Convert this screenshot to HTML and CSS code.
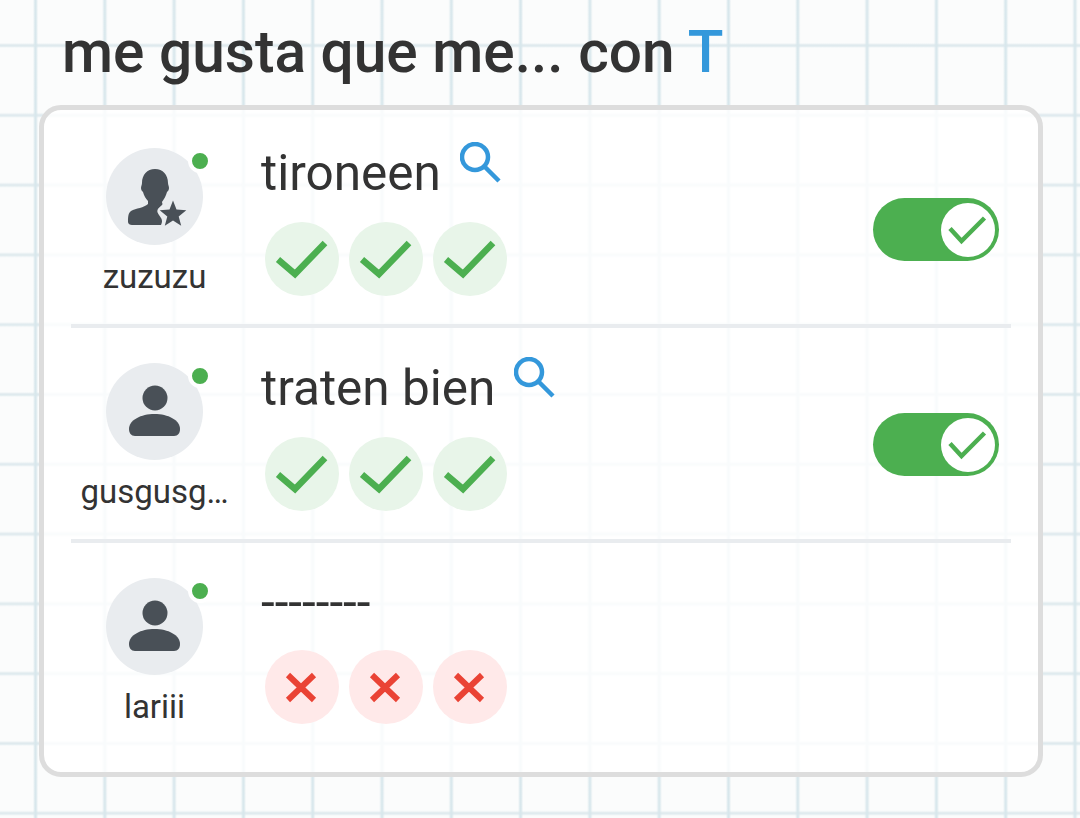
FILE: index.html
```html
<!DOCTYPE html>
<html>
<head lang="es">
    <meta charset="UTF-8">
    <title>me gusta que me... con T</title>
    <link rel="stylesheet" href="styles.css">
</head>
<body>
<h1 class="title">me gusta que me... con <span class="letter">T</span></h1>
<div class="card">
    <div class="row">
        <div class="player">
            <div class="avatar">
                <svg viewBox="0 0 97 97" width="97" height="97">
                    <path class="user" d="M49 21C41 21 36 27 36 35C36 37 35 38 35 40C35 42 36 43 37 44C38 48 40 51 42 53L42 56C38 60 30 60 25 63C22 65 22 70 22 74C22 76 24 77 26 77L55 77C57 73 56 71 53 67C50 63 51 61 56 57C57 56 56 55 56 54C58 51 60 48 61 44C62 43 63 42 63 40C63 38 62 37 62 35C62 27 57 21 49 21Z"/>
                    <polygon class="user" points="67,52.5 70.5,61.6 80.3,62.2 72.7,68.4 75.2,77.8 67,72.5 58.8,77.8 61.3,68.4 53.7,62.2 63.5,61.6"/>
                </svg>
                <span class="dot"></span>
            </div>
            <div class="name">zuzuzu</div>
        </div>
        <div class="answer">
            <div class="word-line">
                <span class="word">tironeen</span>
                <svg class="search" viewBox="0 0 41 41" width="41" height="41">
                    <circle cx="15" cy="15" r="13"/>
                    <line x1="24.5" y1="24.5" x2="39" y2="39"/>
                </svg>
            </div>
            <div class="votes">
                <span class="vote yes"><svg viewBox="0 0 74 74" width="74" height="74"><path d="M13 37.5L30 52L60 21"/></svg></span>
                <span class="vote yes"><svg viewBox="0 0 74 74" width="74" height="74"><path d="M13 37.5L30 52L60 21"/></svg></span>
                <span class="vote yes"><svg viewBox="0 0 74 74" width="74" height="74"><path d="M13 37.5L30 52L60 21"/></svg></span>
            </div>
        </div>
        <div class="toggle">
            <span class="knob"><svg viewBox="0 0 54 54" width="54" height="54"><path d="M9 25.5L20.5 38L43.5 15"/></svg></span>
        </div>
    </div>
    <div class="row">
        <div class="player">
            <div class="avatar">
                <svg viewBox="0 0 97 97" width="97" height="97">
                    <circle class="user" cx="49" cy="35" r="12.5"/>
                    <path class="user" d="M23 66C23 57 35 51 48.5 51C62 51 74 57 74 66C74 70 72 73 68 73H29C25 73 23 70 23 66Z"/>
                </svg>
                <span class="dot"></span>
            </div>
            <div class="name">gusgusg…</div>
        </div>
        <div class="answer">
            <div class="word-line">
                <span class="word">traten bien</span>
                <svg class="search" viewBox="0 0 41 41" width="41" height="41">
                    <circle cx="15" cy="15" r="13"/>
                    <line x1="24.5" y1="24.5" x2="39" y2="39"/>
                </svg>
            </div>
            <div class="votes">
                <span class="vote yes"><svg viewBox="0 0 74 74" width="74" height="74"><path d="M13 37.5L30 52L60 21"/></svg></span>
                <span class="vote yes"><svg viewBox="0 0 74 74" width="74" height="74"><path d="M13 37.5L30 52L60 21"/></svg></span>
                <span class="vote yes"><svg viewBox="0 0 74 74" width="74" height="74"><path d="M13 37.5L30 52L60 21"/></svg></span>
            </div>
        </div>
        <div class="toggle">
            <span class="knob"><svg viewBox="0 0 54 54" width="54" height="54"><path d="M9 25.5L20.5 38L43.5 15"/></svg></span>
        </div>
    </div>
    <div class="row">
        <div class="player">
            <div class="avatar">
                <svg viewBox="0 0 97 97" width="97" height="97">
                    <circle class="user" cx="49" cy="35" r="12.5"/>
                    <path class="user" d="M23 66C23 57 35 51 48.5 51C62 51 74 57 74 66C74 70 72 73 68 73H29C25 73 23 70 23 66Z"/>
                </svg>
                <span class="dot"></span>
            </div>
            <div class="name">lariii</div>
        </div>
        <div class="answer">
            <div class="word-line">
                <span class="word">--------</span>
            </div>
            <div class="votes">
                <span class="vote no"><svg viewBox="0 0 74 74" width="74" height="74"><path d="M23 25L49 50M49 25L23 50"/></svg></span>
                <span class="vote no"><svg viewBox="0 0 74 74" width="74" height="74"><path d="M23 25L49 50M49 25L23 50"/></svg></span>
                <span class="vote no"><svg viewBox="0 0 74 74" width="74" height="74"><path d="M23 25L49 50M49 25L23 50"/></svg></span>
            </div>
        </div>
    </div>
</div>
</body>
</html>
```

FILE: styles.css
```css
* { margin: 0; padding: 0; box-sizing: border-box; }
html, body { height: 100%; }
body {
    font-family: Roboto, "Liberation Sans", sans-serif;
    color: #333;
    overflow: hidden;
    background-color: #fbfcfc;
    background-image:
        linear-gradient(90deg, transparent 0, #d8e7ec 2px, #d8e7ec 3px, transparent 5px),
        linear-gradient(180deg, transparent 0, #dfeaee 2px, #dfeaee 3px, transparent 5px);
    background-size: 69.3px 69.8px;
    background-position: 33px 43px;
}
.title {
    font-size: 58.6px;
    font-weight: 500;
    line-height: 58px;
    padding: 23px 0 24px 62px;
}
.letter { color: #3498db; }
.card {
    width: 1004px;
    margin-left: 39px;
    padding: 3px 27px 18px;
    border: 5px solid #ddd;
    border-radius: 22px;
    background: rgba(255, 255, 255, .82);
}
.row {
    display: flex;
    align-items: flex-start;
    padding: 29px 0 28px;
    border-bottom: 4px solid #e9ecef;
}
.row:last-child { border-bottom: 0; }
.player {
    width: 167px;
    margin: 6px 23px 0 0;
    display: flex;
    flex-direction: column;
    align-items: center;
}
.avatar {
    position: relative;
    width: 97px;
    height: 97px;
    border-radius: 50%;
    background: #e9ecef;
}
.avatar svg { display: block; }
.user { fill: #495057; }
.dot {
    position: absolute;
    top: 1px;
    right: -9px;
    width: 24px;
    height: 24px;
    border: 4px solid #fff;
    border-radius: 50%;
    background: #4caf50;
}
.name {
    margin-top: 13px;
    font-size: 33px;
    line-height: 38px;
    text-align: center;
    white-space: nowrap;
}
.answer { flex: 1; }
.word-line {
    display: flex;
    align-items: center;
    gap: 19px;
    margin-bottom: 22px;
}
.word {
    font-size: 49.5px;
    line-height: 52px;
    padding-top: 4px;
}
.search {
    margin-bottom: 17px;
    fill: none;
    stroke: #3498db;
    stroke-width: 4.5;
}
.votes {
    display: flex;
    gap: 10px;
    margin-left: 4px;
}
.vote {
    width: 74px;
    height: 74px;
    border-radius: 50%;
}
.vote svg { display: block; fill: none; }
.yes { background: #e8f5e9; }
.yes svg { stroke: #4caf50; stroke-width: 6.5; }
.no { background: #ffe9e9; }
.no svg { stroke: #ea4335; stroke-width: 6; }
.toggle {
    display: flex;
    justify-content: flex-end;
    align-items: center;
    width: 126px;
    height: 63px;
    margin: 56px 12px 0 0;
    padding-right: 4px;
    border-radius: 32px;
    background: #4caf50;
}
.knob {
    width: 54px;
    height: 54px;
    border-radius: 50%;
    background: #fff;
}
.knob svg { display: block; fill: none; stroke: #4caf50; stroke-width: 4.5; }
```
